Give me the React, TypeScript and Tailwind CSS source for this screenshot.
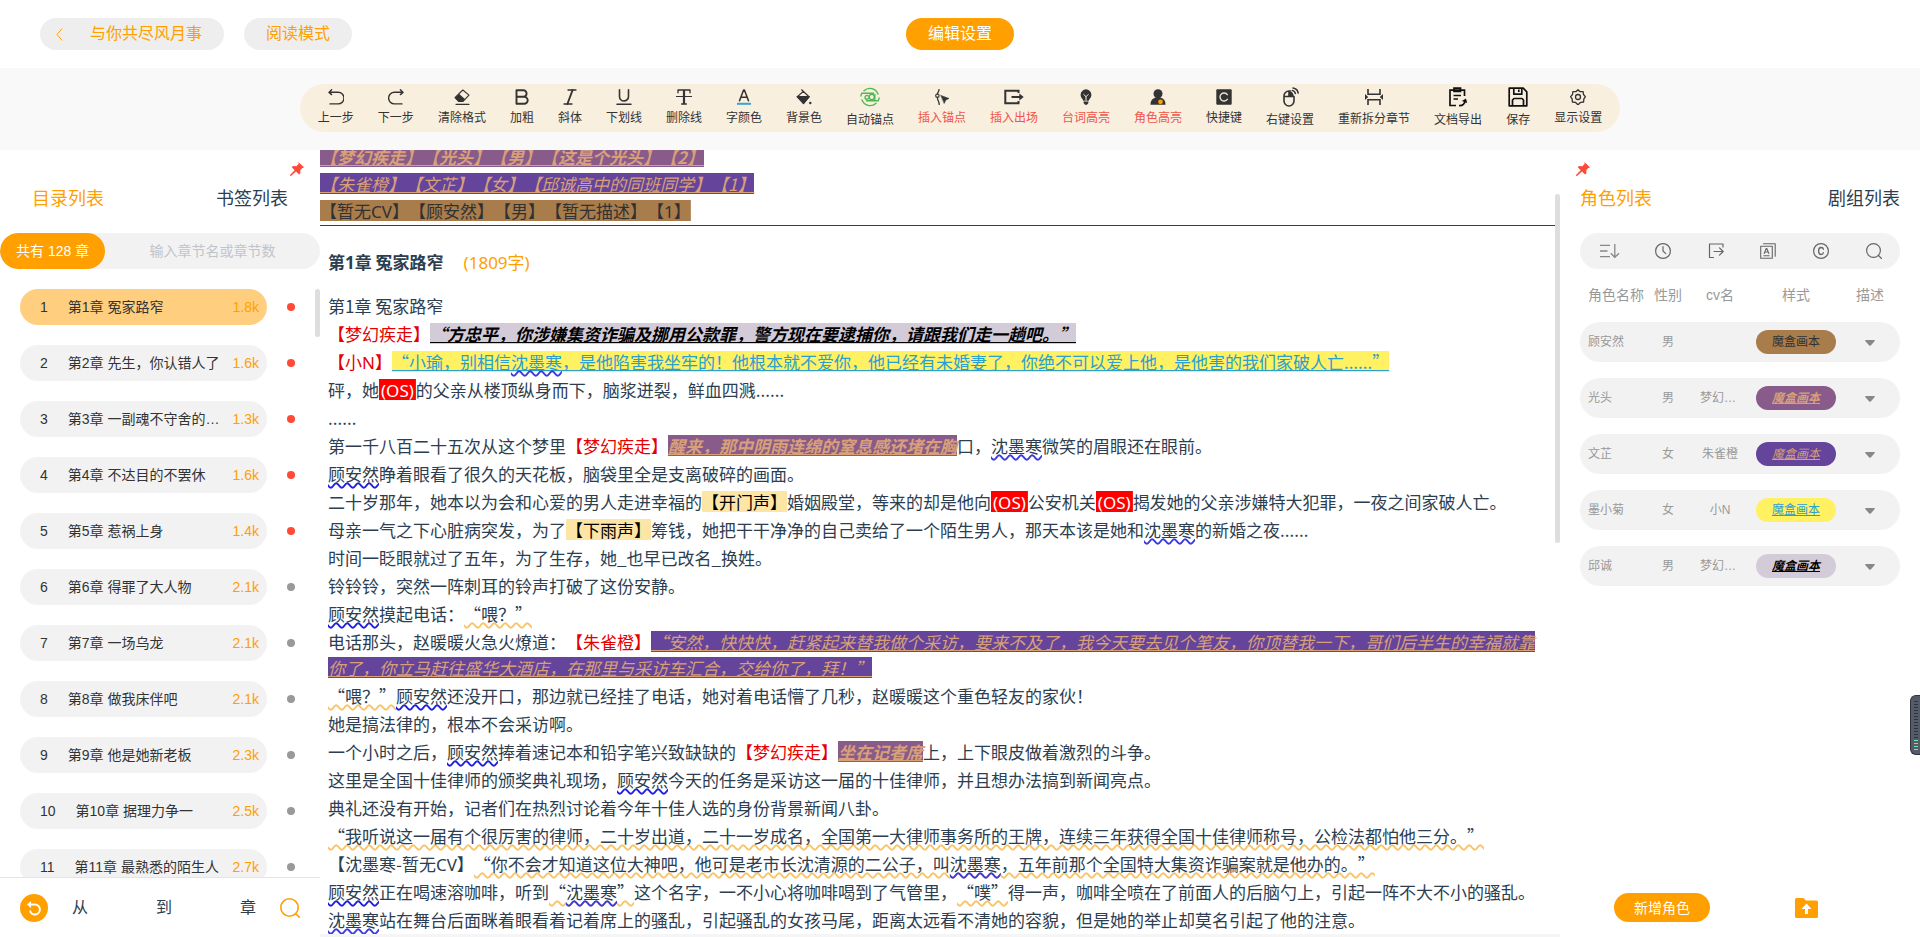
import React from 'react';
import type { ReactNode } from 'react';

/* ---------- toolbar icons ---------- */

type IconProps = { size?: number; children: ReactNode };

const Icon = ({ size = 16, children }: IconProps) => (
  <svg
    width={size}
    height={size}
    viewBox="0 0 16 16"
    fill="none"
    stroke="currentColor"
    strokeWidth="1.4"
    strokeLinecap="round"
    strokeLinejoin="round"
    aria-hidden="true"
  >
    {children}
  </svg>
);

const UndoIcon = () => (
  <Icon>
    <path d="M3.6.8 1 3.4 3.6 5.6M1.4 3.3h8.8a5.6 5.6 0 0 1 0 11.6H2" />
  </Icon>
);
const RedoIcon = () => (
  <Icon>
    <path d="M12.4.8 15 3.4l-2.6 2.2M14.6 3.3H6.4a5.6 5.6 0 0 0 0 11.6H14" />
  </Icon>
);
const EraserIcon = () => (
  <Icon>
    <path d="M8.8 1 15 6.2l-6 6.2H4.6L1 8.6z" strokeWidth="1.1" />
    <path d="M5 4.8 11.2 10.2 9 12.5H4.6L.9 8.8z" fill="currentColor" stroke="none" />
    <path d="M2 15.3h13" strokeWidth="1.2" />
  </Icon>
);
const BoldIcon = () => (
  <Icon>
    <path d="M2.5 1.2h6.8a3.3 3.3 0 0 1 0 6.6H2.5zM2.5 7.8h7.7a3.5 3.5 0 0 1 0 7H2.5z" strokeWidth="1.9" />
  </Icon>
);
const ItalicIcon = () => (
  <Icon>
    <path d="M6 1h8M2 15h8" strokeWidth="1.3" />
    <path d="M10.6 1 5.4 15" strokeWidth="1.9" />
  </Icon>
);
const UnderlineIcon = () => (
  <Icon>
    <path d="M3.5.8v6.7a4.5 4.5 0 0 0 9 0V.8" strokeWidth="1.6" />
    <path d="M1 15.2h14" strokeWidth="1.5" />
  </Icon>
);
const StrikeIcon = () => (
  <Icon>
    <path d="M2 3.8V1h12v2.8M5.6 15h4.8" strokeWidth="1.3" />
    <path d="M8 1v14" strokeWidth="2.2" strokeLinecap="butt" />
    <path d="M.5 7.5h15" strokeWidth="1.2" />
  </Icon>
);
const FontColorIcon = () => (
  <Icon>
    <path d="M3.5 11.8 7.6 1h.8l4.1 10.8M5 8.3h6" strokeWidth="1.5" />
    <path d="M1 14.8h14" stroke="#38a3d6" strokeWidth="2" strokeLinecap="butt" />
  </Icon>
);
const FillIcon = () => (
  <Icon>
    <path d="M5.6.8 13 7.8 7.5 14 1.3 7.8 7.3 2.4" strokeWidth="1.2" />
    <path d="M1.3 7.6h11.8L7.5 14.5z" fill="currentColor" />
    <circle cx="14.3" cy="14" r="1.2" fill="currentColor" stroke="none" />
  </Icon>
);
const AutoAnchorIcon = () => (
  <svg width="20" height="20" viewBox="0 0 20 20" fill="none" stroke="#4db84f" strokeWidth="1.4" strokeLinecap="round" aria-hidden="true">
    <path d="M4 3.8a8.6 8.6 0 0 1 14 3.2M.9 9A9 9 0 0 1 1.8 6.3h11.7M16 16.2A8.6 8.6 0 0 1 2 13M19.1 11a9 9 0 0 1-.9 2.700H6.5" />
    <circle cx="11.8" cy="10" r="2.6" />
    <path d="M9.3 10.5c-1.500 2.800-4.600 2-4.300-.3.200-1.600 2-2.200 3.200-1.200M14.8 7.5v5" />
  </svg>
);
const InsertAnchorIcon = () => (
  <Icon>
    <path d="M5 .5C5 3 3.4 3.5 3.4 5M3.4 8.5c0 3 1.8 3.5 1.8 7" strokeWidth="1.3" />
    <circle cx="3.4" cy="6.7" r="1.7" strokeWidth="1.2" />
    <path d="m7 6.5 8 3-3.2 1.5-1.5 3.2z" fill="currentColor" stroke="currentColor" strokeWidth=".6" />
  </Icon>
);
const InsertExitIcon = () => (
  <svg width="20" height="16" viewBox="0 0 20 16" fill="none" stroke="currentColor" strokeWidth="2" aria-hidden="true">
    <path d="M14.5 4V1.8H1.3v12.4h13.2V12M7.5 8h9" />
    <path d="M15.3 4.5 19.7 8l-4.4 3.5z" fill="currentColor" stroke="none" />
  </svg>
);
const BulbIcon = () => (
  <Icon>
    <path d="M8 .3a5.4 5.4 0 0 1 5.4 5.4c0 2.3-1.3 3.4-2 4.6-.5.9-.4 1.5-.9 1.5h-5c-.5 0-.4-.6-.9-1.5-.7-1.2-2-2.3-2-4.6A5.4 5.4 0 0 1 8 .3zM5.6 12.5h4.8v1.6L9 15.7H7l-1.4-1.6z" fill="currentColor" stroke="none" />
    <path d="m5.8 5.5 2.2 2.2 2.2-2.2M8 7.700v3.600" stroke="#faefdf" strokeWidth="1" />
  </Icon>
);
const PersonIcon = () => (
  <Icon>
    <circle cx="8" cy="4.8" r="4.5" fill="currentColor" stroke="none" />
    <path d="M5.5 8.5h5c3 1 5 3 5 6.5v.7H.5V15c0-3.5 2-5.5 5-6.5z" fill="currentColor" stroke="none" />
    <circle cx="10.5" cy="12.8" r="2.4" fill="#ff9f00" stroke="none" />
  </Icon>
);
const ShortcutIcon = () => (
  <Icon>
    <rect x=".3" y=".3" width="15.4" height="15.4" rx="1" fill="currentColor" stroke="none" />
    <path d="M11.3 5.7A4 4 0 1 0 11.3 10.3" stroke="#e9e2d6" strokeWidth="1.4" />
  </Icon>
);
const MouseIcon = () => (
  <svg width="20" height="20" viewBox="0 0 20 20" fill="none" stroke="currentColor" strokeWidth="1.6" strokeLinecap="round" aria-hidden="true">
    <path d="M10.5 4H9a5 5 0 0 0-5 5v5a5 5 0 0 0 10 0V9.500M4 9.500h10M9 4.500v5" />
    <path d="M9 4.500h2c1.500.8 2.500 2.200 2.800 5H9z" fill="currentColor" stroke="none" />
    <path d="M12.500 3.600c1.500.3 2.600 1.400 2.900 2.900M13 .9c2.800.4 4.800 2.400 5.200 5.200" strokeWidth="1.500" />
  </svg>
);
const SplitIcon = () => (
  <svg width="18" height="18" viewBox="0 0 18 18" fill="none" stroke="currentColor" strokeWidth="1.6" aria-hidden="true">
    <path d="M3 1v5.2h12V1M3 17v-5.2h12V17" />
    <path d="m0 6 3.2 3L0 12zM18 6l-3.2 3 3.2 3z" fill="currentColor" stroke="none" />
  </svg>
);
const ExportIcon = () => (
  <svg width="20" height="20" viewBox="0 0 20 20" fill="none" stroke="#111111" strokeWidth="1.7" aria-hidden="true">
    <path d="M16.5 9V3.2H2v15.3h6M6 1.2h6.5v3.3H6zM5.5 8.5h7.5M5.5 12h4.5" />
    <path d="M11 18.5c3.5.3 5.5-1.3 6.3-4.8" />
    <path d="m13.8 14 4.2-2.5 1.2 4.5z" fill="#111111" stroke="none" />
  </svg>
);
const SaveIcon = () => (
  <svg width="20" height="20" viewBox="0 0 20 20" fill="none" stroke="#111111" strokeWidth="1.7" strokeLinejoin="round" aria-hidden="true">
    <path d="M1.2 1.2h14l3.6 3.6v14H1.2zM4.5 18.5v-5.500l1.500-1.500h8l1.500 1.500v5.500M5.800 1.500v5.700h8V1.500M10.800 2.500v2.500" />
  </svg>
);
const GearIcon = () => (
  <Icon>
    <path
      d="M8 .7 10.1 2.7 13.1 2.6 13.5 5.5 15.4 7.7 13.8 10.1 13.6 13 10.6 13.3 8.6 15.3H7.4L5.4 13.3 2.4 13 2.2 10.1.6 7.7 2.5 5.5 2.9 2.6 5.9 2.7z"
      strokeWidth="1.3"
    />
    <circle cx="8" cy="8" r="2.5" strokeWidth="1.3" />
  </Icon>
);

type Tool = { label: string; icon: ReactNode; red?: boolean };

const tools: Tool[] = [
  { label: '上一步', icon: <UndoIcon /> },
  { label: '下一步', icon: <RedoIcon /> },
  { label: '清除格式', icon: <EraserIcon /> },
  { label: '加粗', icon: <BoldIcon /> },
  { label: '斜体', icon: <ItalicIcon /> },
  { label: '下划线', icon: <UnderlineIcon /> },
  { label: '删除线', icon: <StrikeIcon /> },
  { label: '字颜色', icon: <FontColorIcon /> },
  { label: '背景色', icon: <FillIcon /> },
  { label: '自动锚点', icon: <AutoAnchorIcon /> },
  { label: '插入锚点', icon: <InsertAnchorIcon />, red: true },
  { label: '插入出场', icon: <InsertExitIcon />, red: true },
  { label: '台词高亮', icon: <BulbIcon />, red: true },
  { label: '角色高亮', icon: <PersonIcon />, red: true },
  { label: '快捷键', icon: <ShortcutIcon /> },
  { label: '右键设置', icon: <MouseIcon /> },
  { label: '重新拆分章节', icon: <SplitIcon /> },
  { label: '文档导出', icon: <ExportIcon /> },
  { label: '保存', icon: <SaveIcon /> },
  { label: '显示设置', icon: <GearIcon /> },
];

/* ---------- left panel ---------- */

const PinIcon = () => (
  <svg width="14" height="14" viewBox="0 0 14 14" fill="#ff4a38" aria-hidden="true">
    <path d="M8.3 0 14 5.2l-1.200.9-.6-.2-1.900 2.300.1 3.100-1.300 1.200L6 9.500 1 14l-1-.3.200-.9 4.500-4.600-3-3 1.400-1.200 3.300.2L8.700 1.700z" />
  </svg>
);

const chapters = [
  { name: '第1章 冤家路窄', words: '1.8k', marked: true },
  { name: '第2章 先生，你认错人了', words: '1.6k', marked: true },
  { name: '第3章 一副魂不守舍的样子', words: '1.3k', marked: true },
  { name: '第4章 不达目的不罢休', words: '1.6k', marked: true },
  { name: '第5章 惹祸上身', words: '1.4k', marked: true },
  { name: '第6章 得罪了大人物', words: '2.1k', marked: false },
  { name: '第7章 一场乌龙', words: '2.1k', marked: false },
  { name: '第8章 做我床伴吧', words: '2.1k', marked: false },
  { name: '第9章 他是她新老板', words: '2.3k', marked: false },
  { name: '第10章 据理力争一', words: '2.5k', marked: false },
  { name: '第11章 最熟悉的陌生人', words: '2.7k', marked: false },
];

const ChapterPanel = () => (
  <aside className="flex w-80 shrink-0 flex-col">
    <div className="flex justify-end pt-3 pr-4">
      <button type="button" aria-label="固定">
        <PinIcon />
      </button>
    </div>
    <div className="flex justify-between px-8 pt-[9px] text-lg">
      <button type="button" className="text-[#ff9f00]">目录列表</button>
      <button type="button">书签列表</button>
    </div>
    <div className="mt-5 flex h-9 shrink-0 overflow-hidden rounded-full bg-[#f2f2f2] text-sm">
      <span className="flex items-center rounded-full bg-[#ff9f00] px-4 text-white">共有 128 章</span>
      <input
        aria-label="搜索章节"
        placeholder="输入章节名或章节数"
        className="min-w-0 flex-1 bg-transparent text-center outline-none placeholder:text-[#c0c4cc]"
      />
    </div>
    <div className="mt-5 flex min-h-0 flex-1 overflow-hidden">
      <ul className="flex flex-1 flex-col gap-5 pl-5 text-sm">
        {chapters.map((c, i) => (
          <li key={c.name} className="flex items-center">
            <button
              type="button"
              className={
                i === 0
                  ? 'flex h-9 w-[247px] items-center rounded-full bg-[#ffcf7f] pr-2 pl-5 text-[#333]'
                  : 'flex h-9 w-[247px] items-center rounded-full bg-[#f2f2f2] pr-2 pl-5 text-[#333]'
              }
            >
              <span>{i + 1}</span>
              <span className="mr-3 ml-5 min-w-0 flex-1 truncate text-left">{c.name}</span>
              <span className="text-[#ff9f00]">{c.words}</span>
            </button>
            <span className={c.marked ? 'ml-5 size-2 rounded-full bg-[#ff4a38]' : 'ml-5 size-2 rounded-full bg-[#999]'} />
          </li>
        ))}
      </ul>
      <div className="h-12 w-[5px] rounded-full bg-[#dddee0]" />
    </div>
    <div className="flex h-[60px] shrink-0 items-center justify-between border-t border-[#e4e4e4] px-5">
      <button type="button" aria-label="重置" className="flex size-7 items-center justify-center rounded-full bg-[#ff9f00]">
        <svg width="16" height="16" viewBox="0 0 16 16" fill="none" stroke="#fff" strokeWidth="2" aria-hidden="true">
          <path d="M3.5 4.5H9a5 5 0 1 1-5 6" />
          <path d="M5 1 1 4.5 5 8z" fill="#fff" stroke="none" />
        </svg>
      </button>
      <div className="flex items-center">
        <label htmlFor="range-from">从</label>
        <input id="range-from" className="w-17 bg-transparent text-center outline-none" />
        <label htmlFor="range-to">到</label>
        <input id="range-to" className="w-17 bg-transparent text-center outline-none" />
        <span>章</span>
      </div>
      <button type="button" aria-label="搜索" className="text-[#ff9f00]">
        <svg width="20" height="20" viewBox="0 0 20 20" fill="none" stroke="currentColor" strokeWidth="1.6" aria-hidden="true">
          <circle cx="9.5" cy="9.5" r="8.7" />
          <path d="m15.7 15.7 4 4" />
        </svg>
      </button>
    </div>
  </aside>
);

/* ---------- manuscript ---------- */

const voices = {
  mauve:
    'bg-[linear-gradient(#885b8a,#885b8a)] bg-[length:100%_21px] bg-center bg-no-repeat font-bold italic text-[#d8a078] underline',
  purple:
    'bg-[linear-gradient(#64459b,#64459b)] bg-[length:100%_21px] bg-center bg-no-repeat italic text-[#d8a078] underline',
  brown: 'bg-[linear-gradient(#a97c4c,#a97c4c)] bg-[length:100%_21px] bg-center bg-no-repeat text-[#303133]',
  lavender:
    'bg-[linear-gradient(#d3ccd8,#d3ccd8)] bg-[length:100%_21px] bg-center bg-no-repeat font-bold italic text-black underline',
  yellow:
    'bg-[linear-gradient(#fff162,#fff162)] bg-[length:100%_21px] bg-center bg-no-repeat text-[#2b9fd0] underline',
};

const Voice = ({ kind, children }: { kind: keyof typeof voices; children: ReactNode }) => (
  <span className={voices[kind]}>{children}</span>
);
const Latin = ({ children }: { children: ReactNode }) => (
  <span className="font-['Noto_Sans','Noto_Sans_CJK_SC',sans-serif] leading-none">{children}</span>
);
const Cv = ({ children }: { children: ReactNode }) => <span className="text-[#e60000]">【{children}】</span>;
const Name = ({ children = '顾安然' }: { children?: ReactNode }) => (
  <span className="underline decoration-[#1f1fe0] decoration-wavy decoration-2">{children}</span>
);
const Shen = () => <span className="underline decoration-[#3a3ae0] decoration-wavy decoration-2">沈墨寒</span>;
const Quote = ({ children }: { children: ReactNode }) => (
  <span className="underline decoration-[#f9c468] decoration-wavy decoration-2">{children}</span>
);
const Os = () => (
  <span className="bg-[linear-gradient(#ff0000,#ff0000)] bg-[length:100%_21px] bg-center bg-no-repeat px-[2px] text-white">
    <Latin>(OS)</Latin>
  </span>
);
const Sfx = ({ children }: { children: ReactNode }) => (
  <span className="bg-[linear-gradient(#fde5a6,#fde5a6)] bg-[length:100%_21px] bg-center bg-no-repeat text-black">
    【{children}】
  </span>
);

const paragraphs: ReactNode[] = [
  <>第1章 冤家路窄</>,
  <>
    <Cv>梦幻疾走</Cv>
    <Voice kind="lavender">“方忠平，你涉嫌集资诈骗及挪用公款罪，警方现在要逮捕你，请跟我们走一趟吧。”</Voice>
  </>,
  <>
    <Cv>
      小<Latin>N</Latin>
    </Cv>
    <Voice kind="yellow">
      “小瑜，别相信
      <Shen />
      ，是他陷害我坐牢的！他根本就不爱你，他已经有未婚妻了，你绝不可以爱上他，是他害的我们家破人亡......”
    </Voice>
  </>,
  <>
    砰，她
    <Os />
    的父亲从楼顶纵身而下，脑浆迸裂，鲜血四溅......
  </>,
  <>......</>,
  <>
    第一千八百二十五次从这个梦里
    <Cv>梦幻疾走</Cv>
    <Voice kind="mauve">醒来，那中阴雨连绵的窒息感还堵在胸</Voice>
    口，
    <Shen />
    微笑的眉眼还在眼前。
  </>,
  <>
    <Name />
    睁着眼看了很久的天花板，脑袋里全是支离破碎的画面。
  </>,
  <>
    二十岁那年，她本以为会和心爱的男人走进幸福的
    <Sfx>开门声</Sfx>
    婚姻殿堂，等来的却是他向
    <Os />
    公安机关
    <Os />
    揭发她的父亲涉嫌特大犯罪，一夜之间家破人亡。
  </>,
  <>
    母亲一气之下心脏病突发，为了
    <Sfx>下雨声</Sfx>
    筹钱，她把干干净净的自己卖给了一个陌生男人，那天本该是她和
    <Shen />
    的新婚之夜......
  </>,
  <>时间一眨眼就过了五年，为了生存，她_也早已改名_换姓。</>,
  <>铃铃铃，突然一阵刺耳的铃声打破了这份安静。</>,
  <>
    <Name />
    摸起电话：
    <Quote>“喂？”</Quote>
  </>,
  <>
    电话那头，赵暖暖火急火燎道：
    <Cv>朱雀橙</Cv>
    <Voice kind="purple">
      “安然，快快快，赶紧起来替我做个采访，要来不及了，我今天要去见个笔友，你顶替我一下，哥们后半生的幸福就靠你了，你立马赶往盛华大酒店，在那里与采访车汇合，交给你了，拜！”
    </Voice>
  </>,
  <>
    <Quote>“喂？”</Quote>
    <Name />
    还没开口，那边就已经挂了电话，她对着电话懵了几秒，赵暖暖这个重色轻友的家伙！
  </>,
  <>她是搞法律的，根本不会采访啊。</>,
  <>
    一个小时之后，
    <Name />
    捧着速记本和铅字笔兴致缺缺的
    <Cv>梦幻疾走</Cv>
    <Voice kind="mauve">坐在记者席</Voice>
    上，上下眼皮做着激烈的斗争。
  </>,
  <>
    这里是全国十佳律师的颁奖典礼现场，
    <Name />
    今天的任务是采访这一届的十佳律师，并且想办法搞到新闻亮点。
  </>,
  <>典礼还没有开始，记者们在热烈讨论着今年十佳人选的身份背景新闻八卦。</>,
  <Quote>
    “我听说这一届有个很厉害的律师，二十岁出道，二十一岁成名，全国第一大律师事务所的王牌，连续三年获得全国十佳律师称号，公检法都怕他三分。”
  </Quote>,
  <>
    【沈墨寒-暂无<Latin>CV</Latin>】
    <Quote>
      “你不会才知道这位大神吧，他可是老市长沈清源的二公子，叫
      <Shen />
      ，五年前那个全国特大集资诈骗案就是他办的。”
    </Quote>
  </>,
  <>
    <Name />
    正在喝速溶咖啡，听到
    <Quote>
      “
      <Shen />”
    </Quote>
    这个名字，一不小心将咖啡喝到了气管里，
    <Quote>“噗”</Quote>
    得一声，咖啡全喷在了前面人的后脑勺上，引起一阵不大不小的骚乱。
  </>,
  <>
    <Shen />
    站在舞台后面眯着眼看着记着席上的骚乱，引起骚乱的女孩马尾，距离太远看不清她的容貌，但是她的举止却莫名引起了他的注意。
  </>,
];

const Manuscript = () => (
  <main className="flex min-w-0 flex-1 flex-col border-b-3 border-[#f5f5f5] font-['Noto_Sans_CJK_SC',sans-serif] text-[17px] leading-[26px] [text-spacing-trim:space-all]">
    <div className="flex min-h-0 flex-1">
      <div className="flex min-w-0 flex-1 flex-col overflow-hidden">
        <div className="flex h-[76px] shrink-0 flex-col justify-end overflow-hidden border-b border-[#2c3e50] pb-px leading-[27px]">
          <p>
            <Voice kind="mauve">【梦幻疾走】【光头】【男】【这是个光头】【2】</Voice>
          </p>
          <p>
            <Voice kind="purple">【朱雀橙】【文芷】【女】【邱诚高中的同班同学】【1】</Voice>
          </p>
          <p>
            <Voice kind="brown">
              【暂无<Latin>CV</Latin>】【顾安然】【男】【暂无描述】【<Latin>1</Latin>】
            </Voice>
          </p>
        </div>
        <article className="px-2 pt-[23px]">
          <h1 className="mb-[18px] flex gap-5 font-bold">
            <span>
              第<Latin>1</Latin>章 冤家路窄
            </span>
            <span className="font-normal text-[#ff9f00]">
              <Latin>(1809字)</Latin>
            </span>
          </h1>
          <div className="flex flex-col gap-[2px]">
            {paragraphs.map((p, i) => (
              <p key={i}>{p}</p>
            ))}
          </div>
        </article>
      </div>
      <div className="mt-11 h-[349px] w-[5px] shrink-0 rounded-full bg-[#dddee0]" />
    </div>
  </main>
);

/* ---------- right panel ---------- */

const cast = [
  { name: '顾安然', sex: '男', cv: '', style: 'bg-[#a97c4c] text-[#303133]' },
  { name: '光头', sex: '男', cv: '梦幻疾走', style: 'bg-[#885b8a] font-bold italic text-[#d8a078] underline' },
  { name: '文芷', sex: '女', cv: '朱雀橙', style: 'bg-[#64459b] italic text-[#d8a078] underline' },
  { name: '墨小菊', sex: '女', cv: '小N', style: 'bg-[#fff162] text-[#2b9fd0] underline' },
  { name: '邱诚', sex: '男', cv: '梦幻疾走', style: 'bg-[#d3ccd8] font-bold italic text-black underline' },
];

const castTools: { label: string; icon: ReactNode }[] = [
  {
    label: '排序',
    icon: (
      <svg width="20" height="16" viewBox="0 0 20 16" fill="none" stroke="#888" strokeWidth="1.3" aria-hidden="true">
        <path d="M0 2.3h10M0 8h7.5M0 13.7h10M14.8 1v13M10.8 10.3l4 4 4.2-4" />
      </svg>
    ),
  },
  {
    label: '最近',
    icon: (
      <Icon>
        <circle cx="8" cy="8" r="7.4" strokeWidth="1.2" />
        <path d="M8 3.5V8l2.8 2.6" strokeWidth="1.2" />
      </Icon>
    ),
  },
  {
    label: '导出',
    icon: (
      <Icon>
        <path d="M15 4V1H1.5v13.5h4M6 8.5h9M11.5 4.8l3.7 3.7-3.7 3.7" strokeWidth="1.2" />
      </Icon>
    ),
  },
  {
    label: '样式',
    icon: (
      <Icon>
        <path d="M.7 3.3h11.6v12H.7zM3.5.8h11.7v12.5M4.2 10.5l2-5h.6l2 5M5 9h3M3.8 12.7h5.4" strokeWidth="1.1" />
      </Icon>
    ),
  },
  {
    label: '版权',
    icon: (
      <Icon>
        <circle cx="8" cy="8" r="7.4" strokeWidth="1.2" />
        <path d="M10.3 6.3C10.2 5.1 9.2 4.5 8 4.5c-1.5 0-2.4 1.2-2.4 3.5s.9 3.5 2.4 3.5c1.2 0 2.2-.6 2.3-1.8" strokeWidth="1.3" />
      </Icon>
    ),
  },
  {
    label: '搜索角色',
    icon: (
      <Icon>
        <circle cx="7.5" cy="7.5" r="6.9" strokeWidth="1.2" />
        <path d="m12.5 12.5 3 3" strokeWidth="1.2" />
      </Icon>
    ),
  },
];

const CastPanel = () => (
  <aside className="flex w-90 shrink-0 flex-col">
    <div className="flex pt-3 pl-4">
      <button type="button" aria-label="固定">
        <PinIcon />
      </button>
    </div>
    <div className="flex justify-between px-5 pt-[9px] text-lg">
      <button type="button" className="text-[#ff9f00]">角色列表</button>
      <button type="button">剧组列表</button>
    </div>
    <div className="mx-5 mt-5 grid h-9 shrink-0 grid-cols-6 rounded-full bg-[#f2f2f2] pl-1 text-[#666]">
      {castTools.map((t) => (
        <button key={t.label} type="button" aria-label={t.label} className="flex items-center justify-center">
          {t.icon}
        </button>
      ))}
    </div>
    <table className="mx-5 w-80 table-fixed border-separate border-spacing-x-0 border-spacing-y-4 text-xs text-[#999]">
      <thead className="text-sm leading-[21px]">
        <tr>
          <th className="w-[68px] py-0 pr-0 pl-2 text-left font-normal whitespace-nowrap">角色名称</th>
          <th className="w-10 p-0 font-normal">性别</th>
          <th className="w-16 p-0 font-normal">cv名</th>
          <th className="w-22 p-0 font-normal">样式</th>
          <th className="w-15 p-0 font-normal">描述</th>
        </tr>
      </thead>
      <tbody>
        {cast.map((c) => (
          <tr key={c.name} className="h-10 text-center">
            <td className="rounded-l-full bg-[#f2f2f2] py-0 pr-0 pl-2 text-left">{c.name}</td>
            <td className="bg-[#f2f2f2] p-0">{c.sex}</td>
            <td className="bg-[#f2f2f2] px-3 py-0">
              <div className="truncate">{c.cv}</div>
            </td>
            <td className="bg-[#f2f2f2] px-1 py-0">
              <div className={`rounded-full leading-6 ${c.style}`}>魔盒画本</div>
            </td>
            <td className="rounded-r-full bg-[#f2f2f2] p-0">
              <button type="button" aria-label={`展开${c.name}`} className="align-middle">
                <svg width="10" height="6" viewBox="0 0 10 6" fill="#888" aria-hidden="true">
                  <path d="M1 0h8c.8 0 1.2.7.6 1.3L5.7 5.6a1 1 0 0 1-1.4 0L.4 1.3C-.2.7.2 0 1 0z" />
                </svg>
              </button>
            </td>
          </tr>
        ))}
      </tbody>
    </table>
    <div className="mt-auto flex items-center justify-between pr-[102px] pb-[15px] pl-[54px]">
      <button type="button" className="h-[29px] rounded-full bg-[#ff9f00] px-5 text-sm text-white">新增角色</button>
      <button type="button" aria-label="导入角色">
        <svg width="23" height="20" viewBox="0 0 23 20" fill="#ff9f00" aria-hidden="true">
          <path d="M1.5 0h7l2.5 2.5h10.5A1.5 1.5 0 0 1 23 4v14.5a1.5 1.5 0 0 1-1.5 1.5h-20A1.5 1.5 0 0 1 0 18.5v-17A1.5 1.5 0 0 1 1.5 0z" />
          <path d="m11.5 5.5 5 5.5H13v5h-3v-5H6.5z" fill="#fff" />
        </svg>
      </button>
    </div>
  </aside>
);

const meterBars = Array.from({ length: 17 }, (_, i) => i);

const LevelMeter = () => (
  <div className="absolute top-[695px] right-0 flex h-[60px] w-[10px] flex-col items-end justify-center gap-[2px] overflow-hidden rounded-l-md border border-r-0 border-[#2d323c] bg-[#555b68] pr-[2px]">
    {meterBars.map((i) => (
      <span key={i} className={i > 12 ? 'h-px w-1 shrink-0 bg-[#6ee7a0]' : 'h-px w-1 shrink-0 bg-[#2d323c]'} />
    ))}
  </div>
);

export default function App() {
  return (
    <div className="relative flex h-screen flex-col overflow-hidden bg-white font-['Liberation_Sans','Noto_Sans_CJK_SC',sans-serif] text-[#2c3e50]">
      <header className="grid h-[68px] shrink-0 grid-cols-[1fr_auto_1fr] items-center px-10">
        <div className="flex gap-5 text-[#ff9f00]">
          <button type="button" className="flex h-8 items-center gap-[27px] rounded-full bg-[#eee] pr-[22px] pl-4">
            <svg width="7" height="13" viewBox="0 0 7 13" fill="none" stroke="currentColor" strokeWidth="1" aria-hidden="true">
              <path d="M6.2.5 1 6.5l5.2 6" />
            </svg>
            与你共尽风月事
          </button>
          <button type="button" className="h-8 rounded-full bg-[#eee] px-[22px]">阅读模式</button>
        </div>
        <button type="button" className="h-8 rounded-full bg-[#ff9f00] px-[22px] text-white">编辑设置</button>
      </header>
      <div className="flex h-[82px] shrink-0 items-center justify-center bg-[#f9f9f9] pb-[2px]">
        <div role="toolbar" aria-label="编辑工具" className="flex h-12 items-center gap-6 rounded-full bg-[#f9efdf] px-[18px]">
          {tools.map((t) => (
            <button
              key={t.label}
              type="button"
              className="flex flex-col items-center gap-1 text-xs leading-[18px] whitespace-nowrap text-[#333]"
            >
              {t.icon}
              <span className={t.red ? 'text-[#f0544a]' : ''}>{t.label}</span>
            </button>
          ))}
        </div>
      </div>
      <div className="flex min-h-0 flex-1">
        <ChapterPanel />
        <Manuscript />
        <CastPanel />
      </div>
      <LevelMeter />
    </div>
  );
}
